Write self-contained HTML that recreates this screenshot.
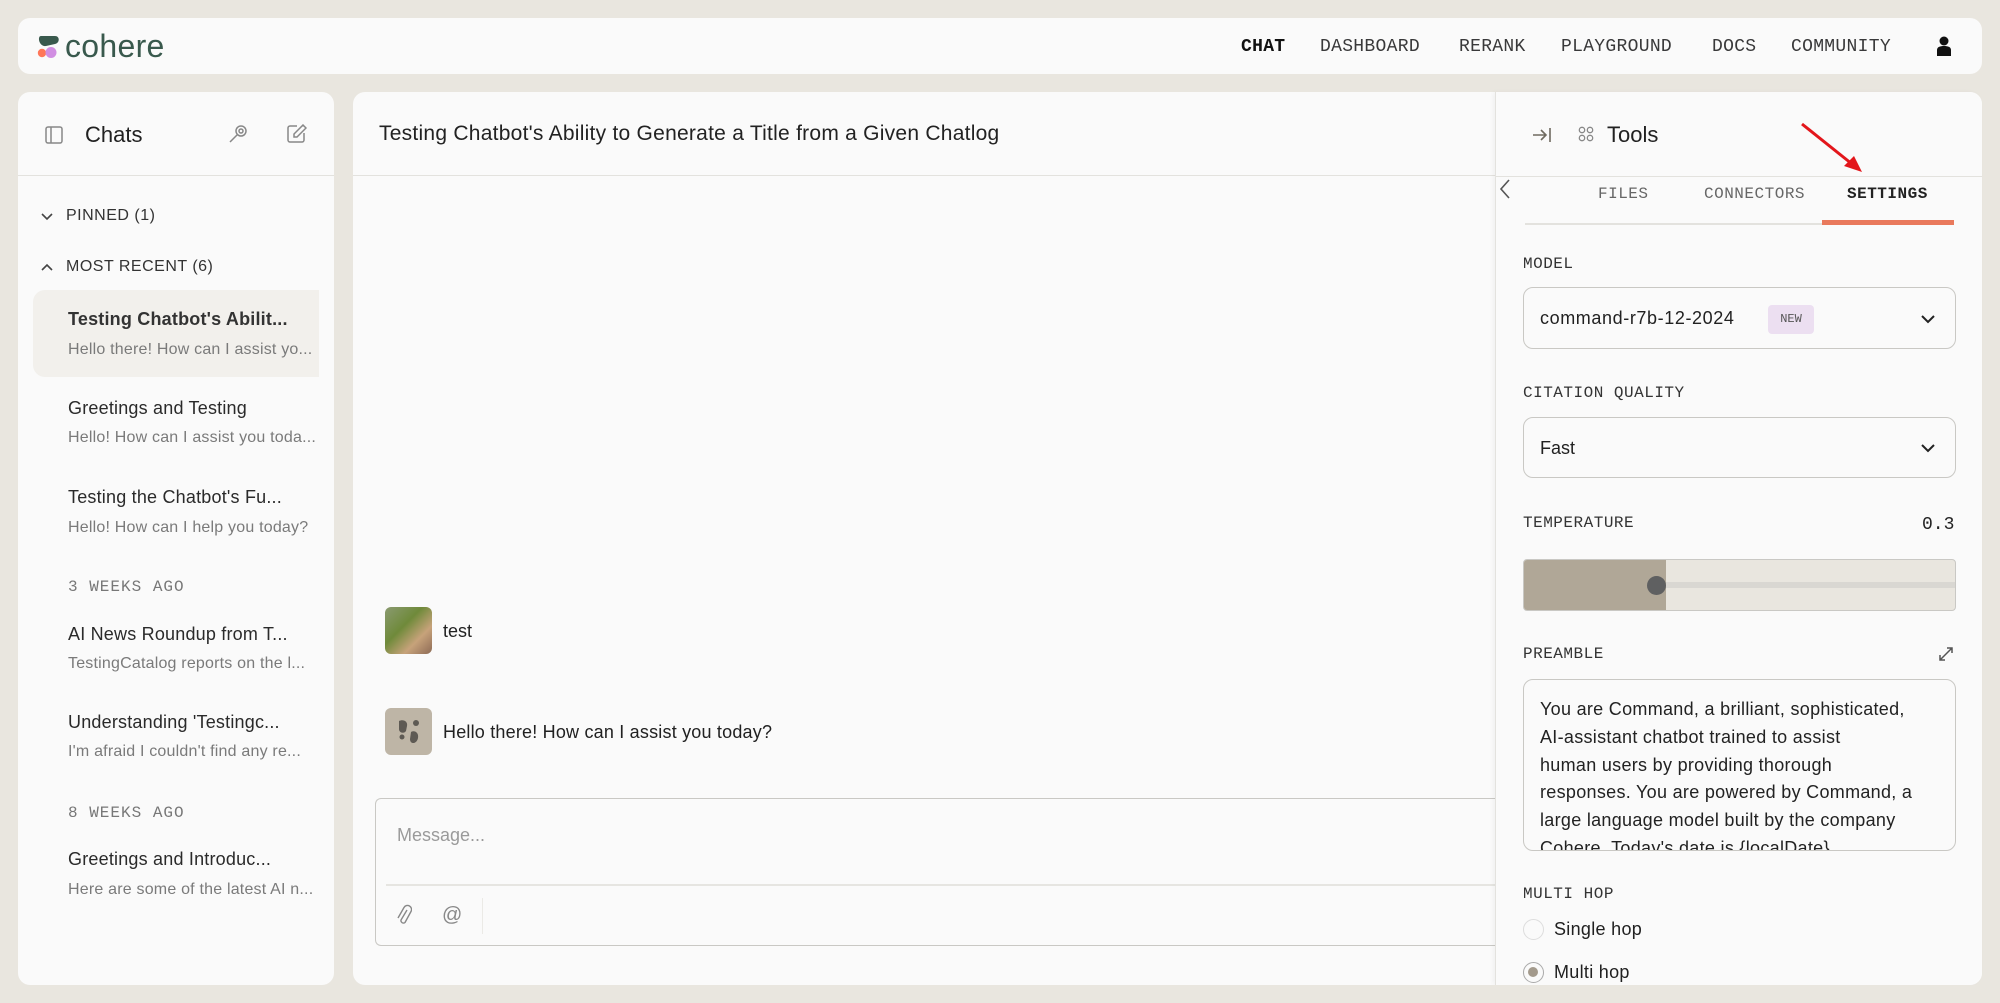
<!DOCTYPE html>
<html><head><meta charset="utf-8"><style>
*{box-sizing:border-box;margin:0;padding:0}
body{width:2000px;height:1003px;background:#e9e6df;font-family:"Liberation Sans",sans-serif;color:#212121;position:relative;overflow:hidden}
.a{position:absolute;white-space:nowrap}
.card{position:absolute;background:#fafafa;border-radius:12px}
.mono{font-family:"Liberation Mono",monospace}
.nav{top:37px;font-family:"Liberation Mono",monospace;font-size:18px;color:#39393a;letter-spacing:0.3px}
.t{font-size:18px;color:#2a2a2a;left:68px;letter-spacing:0.2px}
.s{font-size:16px;color:#7a7a7a;left:68px;letter-spacing:0.2px}
.h{font-size:16px;color:#777;left:68px;letter-spacing:1px}
.lbl{font-family:"Liberation Mono",monospace;font-size:16px;color:#333;left:1523px;letter-spacing:0.5px}
.box{position:absolute;left:1523px;width:433px;border:1.5px solid #c9c8c4;border-radius:10px;background:#fafafa}
</style></head><body>
<div class="card" style="left:18px;top:18px;width:1964px;height:56px"></div>
<svg class="a" style="left:36px;top:34px" width="26" height="26" viewBox="0 0 26 26"><path d="M5 2h14c5 0 5 7 0 8l-9 2c-7 1-9-10-5-10z" fill="#39594d"/><circle cx="6" cy="19" r="4.2" fill="#ff7759"/><circle cx="15" cy="18.5" r="5.5" fill="#d18ee2"/></svg>
<div class="a" style="left:65px;top:28px;font-size:32px;color:#39594d;letter-spacing:0.3px">cohere</div>
<div class="a nav" style="left:1241px;color:#111;font-weight:bold">CHAT</div>
<div class="a nav" style="left:1320px">DASHBOARD</div>
<div class="a nav" style="left:1459px">RERANK</div>
<div class="a nav" style="left:1561px">PLAYGROUND</div>
<div class="a nav" style="left:1712px">DOCS</div>
<div class="a nav" style="left:1791px">COMMUNITY</div>
<svg class="a" style="left:1937px;top:36px" width="14" height="20" viewBox="0 0 14 20"><circle cx="7" cy="5" r="4.5" fill="#111"/><path d="M0 20v-6c0-3 3-4 7-4s7 1 7 4v6z" fill="#111"/></svg>

<div class="card" style="left:18px;top:92px;width:316px;height:893px"></div>
<svg class="a" style="left:45px;top:126px" width="18" height="18" viewBox="0 0 18 18" fill="none" stroke="#888" stroke-width="1.5"><rect x="1" y="1" width="16" height="16" rx="2"/><path d="M6 1v16"/></svg>
<div class="a" style="left:85px;top:122px;font-size:22px">Chats</div>
<svg class="a" style="left:228px;top:124px" width="20" height="20" viewBox="0 0 20 20" fill="none" stroke="#888" stroke-width="1.5"><circle cx="13" cy="7" r="5"/><circle cx="13" cy="7" r="2"/><path d="M9 11l-7 7"/></svg>
<svg class="a" style="left:287px;top:124px" width="20" height="20" viewBox="0 0 20 20" fill="none" stroke="#888" stroke-width="1.5"><path d="M10 2H3a2 2 0 0 0-2 2v12a2 2 0 0 0 2 2h12a2 2 0 0 0 2-2V9"/><path d="M16 1l3 3-9 9H7v-3z"/></svg>
<div class="a" style="left:18px;top:175px;width:316px;height:1px;background:#e3e2de"></div>
<svg class="a" style="left:40px;top:212px" width="14" height="10" viewBox="0 0 14 10" fill="none" stroke="#444" stroke-width="1.6"><path d="M2 2l5 5 5-5"/></svg>
<div class="a" style="left:66px;top:207px;font-size:16px;color:#333;letter-spacing:0.5px">PINNED (1)</div>
<svg class="a" style="left:40px;top:262px" width="14" height="10" viewBox="0 0 14 10" fill="none" stroke="#444" stroke-width="1.6"><path d="M2 8l5-5 5 5"/></svg>
<div class="a" style="left:66px;top:258px;font-size:16px;color:#333;letter-spacing:0.5px">MOST RECENT (6)</div>
<div class="a" style="left:33px;top:290px;width:286px;height:87px;background:#f2f0ec;border-radius:12px 0 0 12px"></div>
<div class="a t" style="top:309px;font-weight:bold;color:#333">Testing Chatbot's Abilit...</div>
<div class="a s" style="top:341px">Hello there! How can I assist yo...</div>
<div class="a t" style="top:398px">Greetings and Testing</div>
<div class="a s" style="top:429px">Hello! How can I assist you toda...</div>
<div class="a t" style="top:487px">Testing the Chatbot's Fu...</div>
<div class="a s" style="top:519px">Hello! How can I help you today?</div>
<div class="a h mono" style="top:578px">3 WEEKS AGO</div>
<div class="a t" style="top:624px">AI News Roundup from T...</div>
<div class="a s" style="top:655px">TestingCatalog reports on the l...</div>
<div class="a t" style="top:712px">Understanding 'Testingc...</div>
<div class="a s" style="top:743px">I'm afraid I couldn't find any re...</div>
<div class="a h mono" style="top:804px">8 WEEKS AGO</div>
<div class="a t" style="top:849px">Greetings and Introduc...</div>
<div class="a s" style="top:881px">Here are some of the latest AI n...</div>

<div class="card" style="left:353px;top:92px;width:1629px;height:893px"></div>
<div class="a" style="left:379px;top:122px;font-size:21px;color:#222;letter-spacing:0.25px">Testing Chatbot's Ability to Generate a Title from a Given Chatlog</div>
<div class="a" style="left:353px;top:175px;width:1142px;height:1px;background:#e3e2de"></div>
<div class="a" style="left:385px;top:607px;width:47px;height:47px;border-radius:6px;background:linear-gradient(135deg,#8a9a70,#6f8a3a 40%,#c7a27a 70%,#8d6b55)"></div>
<div class="a" style="left:443px;top:621px;font-size:18px">test</div>
<div class="a" style="left:385px;top:708px;width:47px;height:47px;border-radius:6px;background:#beb5a6"></div>
<svg class="a" style="left:396px;top:718px" width="26" height="28" viewBox="0 0 26 28"><path d="M3 3c4-2 9 0 8 5l-1 5c-2 3-7 2-7-2z" fill="#5e5a54"/><path d="M15 14c3-2 8 0 7 6s-8 7-8 1z" fill="#5e5a54"/><circle cx="20" cy="5" r="3" fill="#5e5a54"/><circle cx="6" cy="19" r="2.5" fill="#5e5a54"/></svg>
<div class="a" style="left:443px;top:722px;font-size:18px;letter-spacing:0.2px">Hello there! How can I assist you today?</div>
<div class="a" style="left:375px;top:798px;width:1140px;height:148px;border:1.5px solid #c9c8c4;border-right:none;border-radius:6px 0 0 6px;background:#fafafa"></div>
<div class="a" style="left:397px;top:825px;font-size:18px;color:#9a9a9a">Message...</div>
<div class="a" style="left:386px;top:884px;width:1110px;height:2px;background:#e6e5e1"></div>
<svg class="a" style="left:396px;top:904px" width="16" height="22" viewBox="0 0 16 22" fill="none" stroke="#888" stroke-width="1.4"><path d="M11 6l-6 10a2.5 2.5 0 0 0 4 2.5l6-11a4 4 0 0 0-7-4L2 14"/></svg>
<div class="a" style="left:442px;top:904px;font-size:20px;color:#888">@</div>
<div class="a" style="left:482px;top:898px;width:1px;height:36px;background:#ebeae6"></div>

<div class="a" style="left:1495px;top:92px;width:487px;height:893px;background:#fafafa;border-left:1px solid #e3e2de;border-radius:0 12px 12px 0;box-shadow:-2px 0 4px rgba(0,0,0,0.04)"></div>
<svg class="a" style="left:1532px;top:125px" width="22" height="20" viewBox="0 0 22 20" fill="none" stroke="#6f6a60" stroke-width="1.6"><path d="M1 10h13M9 5l5 5-5 5M18 3v14"/></svg>
<svg class="a" style="left:1578px;top:126px" width="16" height="16" viewBox="0 0 16 16" fill="none" stroke="#888" stroke-width="1.3"><circle cx="4" cy="4" r="2.7"/><circle cx="12" cy="4" r="2.7"/><circle cx="4" cy="12" r="2.7"/><circle cx="12" cy="12" r="2.7"/></svg>
<div class="a" style="left:1607px;top:122px;font-size:22px">Tools</div>
<svg class="a" style="left:1796px;top:120px" width="70" height="56" viewBox="0 0 70 56"><path d="M6 4L56 44" stroke="#e3161b" stroke-width="3"/><path d="M66 52L48 46L58 36z" fill="#e3161b"/></svg>
<div class="a" style="left:1496px;top:176px;width:486px;height:1px;background:#e3e2de"></div>
<svg class="a" style="left:1498px;top:178px" width="14" height="22" viewBox="0 0 14 22" fill="none" stroke="#555" stroke-width="1.6"><path d="M11 2l-8 9 8 9"/></svg>
<div class="a mono" style="left:1598px;top:185px;font-size:16px;color:#666;letter-spacing:0.5px">FILES</div>
<div class="a mono" style="left:1704px;top:185px;font-size:16px;color:#666;letter-spacing:0.5px">CONNECTORS</div>
<div class="a mono" style="left:1847px;top:185px;font-size:16px;color:#222;font-weight:bold;letter-spacing:0.5px">SETTINGS</div>
<div class="a" style="left:1525px;top:223px;width:300px;height:2px;background:#e3e2de"></div>
<div class="a" style="left:1822px;top:220px;width:132px;height:5px;background:#e9795c"></div>
<div class="a lbl" style="top:255px">MODEL</div>
<div class="box" style="top:287px;height:62px"></div>
<div class="a" style="left:1540px;top:308px;font-size:18px;letter-spacing:0.6px">command-r7b-12-2024</div>
<div class="a mono" style="left:1768px;top:305px;width:46px;height:29px;background:#ecdff1;border-radius:4px;font-size:12px;line-height:29px;text-align:center;color:#555">NEW</div>
<svg class="a" style="left:1920px;top:313px" width="16" height="12" viewBox="0 0 16 12" fill="none" stroke="#222" stroke-width="2"><path d="M2 3l6 6 6-6"/></svg>
<div class="a lbl" style="top:384px">CITATION QUALITY</div>
<div class="box" style="top:417px;height:61px"></div>
<div class="a" style="left:1540px;top:438px;font-size:18px">Fast</div>
<svg class="a" style="left:1920px;top:442px" width="16" height="12" viewBox="0 0 16 12" fill="none" stroke="#222" stroke-width="2"><path d="M2 3l6 6 6-6"/></svg>
<div class="a lbl" style="top:514px">TEMPERATURE</div>
<div class="a mono" style="left:1922px;top:515px;font-size:18px;color:#222">0.3</div>
<div class="a" style="left:1523px;top:559px;width:433px;height:52px;border:1.5px solid #c9c8c4;border-radius:4px;background:#e9e6df;overflow:hidden"><div style="position:absolute;left:0;top:0;width:142px;height:52px;background:#b0a797"></div><div style="position:absolute;left:142px;top:22px;width:300px;height:6px;background:#d9d7d2"></div></div>
<div class="a" style="left:1647px;top:576px;width:19px;height:19px;border-radius:50%;background:#5f6061"></div>
<div class="a lbl" style="top:645px">PREAMBLE</div>
<svg class="a" style="left:1938px;top:646px" width="16" height="16" viewBox="0 0 16 16" fill="none" stroke="#555" stroke-width="1.5"><path d="M9 2h5v5M14 2L2 14M2 9v5h5"/></svg>
<div class="box" style="top:679px;height:172px;overflow:hidden;padding:16px 16px 0 16px;font-size:18px;line-height:27.8px;color:#222;white-space:nowrap;letter-spacing:0.3px">You are Command, a brilliant, sophisticated,<br>AI-assistant chatbot trained to assist<br>human users by providing thorough<br>responses. You are powered by Command, a<br>large language model built by the company<br>Cohere. Today's date is {localDate}.</div>
<div class="a lbl" style="top:885px">MULTI HOP</div>
<div class="a" style="left:1523px;top:919px;width:21px;height:21px;border-radius:50%;border:1.5px solid #ddd"></div>
<div class="a" style="left:1554px;top:919px;font-size:18px;letter-spacing:0.3px">Single hop</div>
<div class="a" style="left:1523px;top:962px;width:21px;height:21px;border-radius:50%;border:1.5px solid #aaa"><div style="position:absolute;left:4px;top:4px;width:10px;height:10px;border-radius:50%;background:#a39a8c"></div></div>
<div class="a" style="left:1554px;top:962px;font-size:18px;letter-spacing:0.3px">Multi hop</div>
<div class="a" style="left:0;top:985px;width:2000px;height:18px;background:#e9e6df"></div>
</body></html>
